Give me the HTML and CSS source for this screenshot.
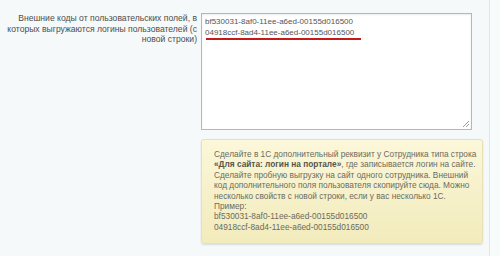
FILE: index.html
```html
<!DOCTYPE html>
<html>
<head>
<meta charset="utf-8">
<link rel="stylesheet" href="styles.css">
</head>
<body>
<div class="page">
  <div class="content">
    <div class="row">
      <div class="label">Внешние коды от пользовательских полей, в<br>которых выгружаются логины пользователей (с<br>новой строки)</div>
      <div class="field">
        <div class="textarea">
          <div class="line">bf530031-8af0-11ee-a6ed-00155d016500</div>
          <div class="line underlined">04918ccf-8ad4-11ee-a6ed-00155d016500</div>
          <svg class="grip" width="8" height="8" viewBox="0 0 8 8"><path d="M7 1L1 7M7 4L4 7" stroke="#9a9a9a" stroke-width="1"/></svg>
        </div>
      </div>
    </div>
    <div class="row">
      <div class="label"></div>
      <div class="field">
        <div class="note">Сделайте в 1С дополнительный реквизит у Сотрудника типа строка<br><b>«Для сайта: логин на портале»</b>, где записывается логин на сайте.<br>Сделайте пробную выгрузку на сайт одного сотрудника. Внешний<br>код дополнительного поля пользователя скопируйте сюда. Можно<br>несколько свойств с новой строки, если у вас несколько 1С.<br>Пример:<br>bf530031-8af0-11ee-a6ed-00155d016500<br>04918ccf-8ad4-11ee-a6ed-00155d016500</div>
      </div>
    </div>
  </div>
  <div class="side"></div>
</div>
</body>
</html>
```
FILE: styles.css
```css
html, body {
  margin: 0;
  padding: 0;
}
body {
  background: #f5f9f9;
  font-family: "Liberation Sans", Arial, sans-serif;
  font-size: 8px;
  width: 500px;
  height: 256px;
  overflow: hidden;
}
.page {
  display: flex;
  height: 256px;
}
.content {
  width: 489px;
  display: flex;
  flex-direction: column;
  gap: 9px;
  padding-top: 13px;
}
.side {
  width: 10px;
  border-left: 1px solid #e2e8e9;
  background: #f8fbfb;
}
.row {
  display: flex;
}
.label {
  width: 197px;
  flex: none;
  text-align: right;
  color: #4e4e4e;
  font-size: 8.6px;
  line-height: 10.5px;
  white-space: nowrap;
}
.field {
  padding-left: 4px;
}
.textarea {
  position: relative;
  width: 266px;
  height: 112px;
  border: 1px solid #b3b9bb;
  background: #fff;
  box-shadow: inset 0 1px 2px rgba(0,0,0,0.08);
  padding: 3px 0 0 3px;
  color: #555;
  line-height: 10.5px;
}
.textarea .line {
  white-space: nowrap;
}
.underlined {
  display: inline-block;
  position: relative;
}
.underlined::after {
  content: "";
  position: absolute;
  left: 1px;
  right: -7px;
  bottom: -2px;
  height: 2px;
  background: #c41a1a;
}
.grip {
  position: absolute;
  right: 1px;
  bottom: 1px;
}
.note {
  width: 255px;
  height: 84px;
  padding: 9px 13px 10px 12px;
  background: linear-gradient(#fbf7d9, #f2ebbc);
  border: 1px solid #e8e1b6;
  border-radius: 3px;
  box-shadow: 0 1px 2px rgba(0,0,0,0.12);
  color: #6b6b5e;
  font-size: 8.3px;
  line-height: 10.4px;
  white-space: nowrap;
}
.note b {
  color: #55554a;
}
```
